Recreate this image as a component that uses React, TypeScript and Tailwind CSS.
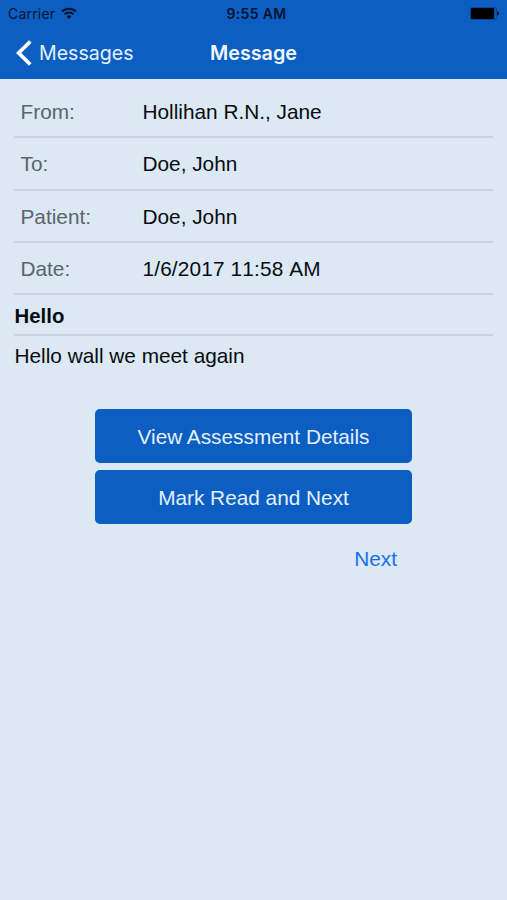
import React from 'react';

interface DetailRowProps {
    label: string;
    value: string;
    valueClassName?: string;
}

const details: DetailRowProps[] = [
    { label: 'From:', value: 'Hollihan R.N., Jane' },
    { label: 'To:', value: 'Doe, John' },
    { label: 'Patient:', value: 'Doe, John' },
    { label: 'Date:', value: '1/6/2017 11:58 AM', valueClassName: 'tracking-[0.15px]' },
];

const StatusBar: React.FC = () => (
    <div className="grid h-[27px] grid-cols-3 items-center pl-2 pr-[7px] text-[14px] text-[#03142c]">
        <div className="flex items-center gap-[6px]">
            <span className="tracking-[0.2px]">Carrier</span>
            <svg className="-mt-0.5" width="16" height="12" viewBox="0 0 16 12" fill="none" stroke="currentColor" strokeWidth="2">
                <path d="M1 4.5 A 10 10 0 0 1 15 4.5" />
                <path d="M3.5 7.3 A 6.4 6.4 0 0 1 12.5 7.3" />
                <path d="M8 12 L5.5 9.4 A 3.6 3.6 0 0 1 10.5 9.4 Z" fill="currentColor" stroke="none" />
            </svg>
        </div>
        <span className="pl-[5px] text-center font-semibold tracking-[0.35px]">9:55 AM</span>
        <svg className="justify-self-end" width="30" height="13" viewBox="0 0 30 13">
            <rect x="0.5" y="0.5" width="26" height="12" rx="1.5" fill="none" stroke="#06459a" />
            <rect x="1" y="1" width="23.3" height="11" rx="1" fill="#000" />
            <path d="M27 4.5 C29.6 5 29.6 8 27 8.5 Z" fill="#03142c" />
        </svg>
    </div>
);

const NavBar: React.FC = () => (
    <div className="grid h-[52px] grid-cols-[1fr_auto_1fr] items-center px-4 text-[19.6px]">
        <button type="button" className="flex items-center gap-[7px] text-[#e3f0ff]">
            <svg width="16" height="26" viewBox="0 0 16 26" fill="none" stroke="#fff" strokeWidth="3.8">
                <path d="M14.3 1.5 L2.7 13 L14.3 24.5" />
            </svg>
            <span>Messages</span>
        </button>
        <h1 className="text-[19.8px] font-semibold text-[#f0f8ff]">Message</h1>
        <span />
    </div>
);

const DetailRow: React.FC<DetailRowProps> = ({ label, value, valueClassName = '' }) => (
    <div className="flex h-[52.4px] items-center border-b-2 border-[#c9d5de] pl-[6.5px] pt-[2px]">
        <span className="w-[122px] text-[#5b646d]">{label}</span>
        <span className={`[font-kerning:none] ${valueClassName}`}>{value}</span>
    </div>
);

const App: React.FC = () => {
    return (
        <div className="min-h-screen w-full bg-[#dce8f3] font-['Liberation_Sans',sans-serif] text-[20.8px] leading-6 text-[#070c12]">
            <header className="h-[79px] bg-[#0c5ec2] font-['Inter',sans-serif]">
                <StatusBar />
                <NavBar />
            </header>

            <main className="px-[14px] pt-[6.8px]">
                {details.map((row) => (
                    <DetailRow key={row.label} {...row} />
                ))}
                <h2 className="flex h-[40.6px] items-center border-b-2 border-[#c9d5de] pl-[0.5px] pt-[2px] text-[20.4px] font-bold">Hello</h2>
                <p className="flex h-[40.6px] items-center pl-[0.5px]">Hello wall we meet again</p>

                <div className="mx-auto mt-8 flex w-[317px] flex-col gap-[7px]">
                    <button type="button" className="h-[54px] rounded-[5px] bg-[#0c5ec2] pt-0.5 text-[#e3f0ff]">
                        View Assessment Details
                    </button>
                    <button type="button" className="h-[54px] rounded-[5px] bg-[#0c5ec2] pt-0.5 text-[#e3f0ff]">
                        Mark Read and Next
                    </button>
                    <button type="button" className="mr-[15px] mt-4 self-end text-[#196ff0]">
                        Next
                    </button>
                </div>
            </main>
        </div>
    );
};

export default App;
